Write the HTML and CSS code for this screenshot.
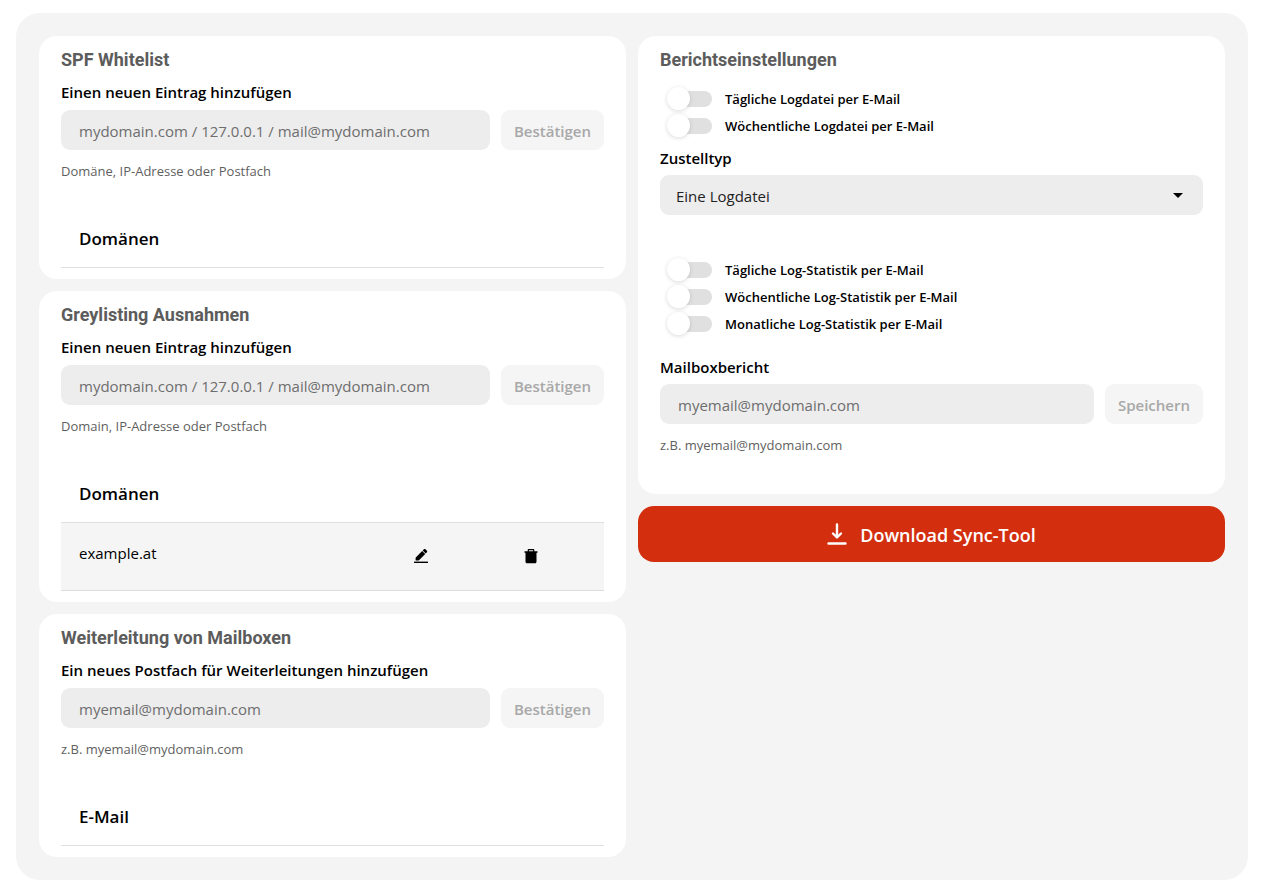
FILE: index.html
```html
<!DOCTYPE html>
<html lang="de">
<head>
<meta charset="utf-8">
<meta name="viewport" content="width=device-width, initial-scale=1">
<title>Einstellungen</title>
<link rel="stylesheet" href="styles.css">
</head>
<body>
<main class="panel">
  <div class="column">
    <section class="card">
      <h2 class="card-title">SPF Whitelist</h2>
      <form class="entry">
        <label class="field-label" for="spf">Einen neuen Eintrag hinzufügen</label>
        <div class="field-row">
          <input class="text-input" id="spf" type="text" placeholder="mydomain.com / 127.0.0.1 / mail@mydomain.com">
          <button class="submit" type="submit" disabled>Bestätigen</button>
        </div>
        <p class="hint">Domäne, IP-Adresse oder Postfach</p>
      </form>
      <table class="list">
        <thead><tr><th scope="col">Domänen</th></tr></thead>
      </table>
    </section>

    <section class="card">
      <h2 class="card-title">Greylisting Ausnahmen</h2>
      <form class="entry">
        <label class="field-label" for="grey">Einen neuen Eintrag hinzufügen</label>
        <div class="field-row">
          <input class="text-input" id="grey" type="text" placeholder="mydomain.com / 127.0.0.1 / mail@mydomain.com">
          <button class="submit" type="submit" disabled>Bestätigen</button>
        </div>
        <p class="hint">Domain, IP-Adresse oder Postfach</p>
      </form>
      <table class="list">
        <thead><tr><th scope="col" colspan="3">Domänen</th></tr></thead>
        <tbody>
          <tr>
            <td>example.at</td>
            <td class="action">
              <button class="icon-button" type="button" aria-label="Bearbeiten">
                <svg class="icon" viewBox="0 0 16 16" aria-hidden="true"><path d="M1 13.600h14V15H1z"/><path d="M3 9.200 9.200 3l3 3L6 12.200c-.3.3-.6.4-1 .4H3.200c-.4 0-.6-.2-.6-.6v-1.800c0-.4.1-.7.4-1zM9.700 2.500l1.200-1.200c.5-.5 1.100-.5 1.600 0l1.400 1.400c.5.5.5 1.100 0 1.600l-1.200 1.200z"/></svg>
              </button>
            </td>
            <td class="action action-last">
              <button class="icon-button" type="button" aria-label="Löschen">
                <svg class="icon" viewBox="0 0 16 16" aria-hidden="true"><path fill-rule="evenodd" d="M5.500 1h5c.5 0 .8.3.8.8v1.500h3.200v1.400h-1v9c0 .9-.6 1.500-1.500 1.500H4c-.9 0-1.500-.6-1.500-1.500v-9h-1V3.300h3.200V1.800c0-.5.3-.8.8-.8zm.4 1.200v1.100h4.200V2.200z"/></svg>
              </button>
            </td>
          </tr>
        </tbody>
      </table>
    </section>

    <section class="card">
      <h2 class="card-title">Weiterleitung von Mailboxen</h2>
      <form class="entry">
        <label class="field-label" for="forward">Ein neues Postfach für Weiterleitungen hinzufügen</label>
        <div class="field-row">
          <input class="text-input" id="forward" type="email" placeholder="myemail@mydomain.com">
          <button class="submit" type="submit" disabled>Bestätigen</button>
        </div>
        <p class="hint">z.B. myemail@mydomain.com</p>
      </form>
      <table class="list">
        <thead><tr><th scope="col">E-Mail</th></tr></thead>
      </table>
    </section>
  </div>

  <div class="column">
    <section class="card card-reports">
      <h2 class="card-title">Berichtseinstellungen</h2>
      <div class="switches">
        <label class="switch-row"><input class="switch" type="checkbox"><span>Tägliche Logdatei per E-Mail</span></label>
        <label class="switch-row"><input class="switch" type="checkbox"><span>Wöchentliche Logdatei per E-Mail</span></label>
      </div>
      <label class="field-label" for="delivery">Zustelltyp</label>
      <select class="select" id="delivery"><option>Eine Logdatei</option></select>
      <div class="switches switches-stats">
        <label class="switch-row"><input class="switch" type="checkbox"><span>Tägliche Log-Statistik per E-Mail</span></label>
        <label class="switch-row"><input class="switch" type="checkbox"><span>Wöchentliche Log-Statistik per E-Mail</span></label>
        <label class="switch-row"><input class="switch" type="checkbox"><span>Monatliche Log-Statistik per E-Mail</span></label>
      </div>
      <form class="report-form">
        <label class="field-label" for="report">Mailboxbericht</label>
        <div class="field-row">
          <input class="text-input" id="report" type="email" placeholder="myemail@mydomain.com">
          <button class="submit" type="submit" disabled>Speichern</button>
        </div>
        <p class="hint">z.B. myemail@mydomain.com</p>
      </form>
    </section>
    <button class="download" type="button">
      <svg class="download-icon" viewBox="0 0 20 22" aria-hidden="true"><path d="M10 1.500v12.500M6 10.500l4 4 4-4M1.500 20.500h17"/></svg>
      <span>Download Sync-Tool</span>
    </button>
  </div>
</main>
</body>
</html>
```

FILE: styles.css
```css
*,
*::before,
*::after {
  box-sizing: border-box;
}

body {
  margin: 0;
  padding: 13px 34px 14px 16px;
  background: #fff;
  color: #000;
  font-family: "Open Sans", "Noto Sans", sans-serif;
  font-size: 15px;
  line-height: 24px;
}

button,
input,
select {
  margin: 0;
  border: 0;
  font: inherit;
}

.panel {
  display: grid;
  grid-template-columns: repeat(2, minmax(0, 1fr));
  gap: 12px;
  padding: 23px;
  border-radius: 24px;
  background: #f4f4f4;
}

.column {
  display: flex;
  flex-direction: column;
  gap: 12px;
}

.card {
  padding: 12px 22px 11px;
  border-radius: 18px;
  background: #fff;
}

.card-reports {
  padding-bottom: 39px;
}

.card-title {
  margin: 0;
  color: #5c5c5c;
  font-family: Roboto, sans-serif;
  font-size: 18px;
  font-weight: 700;
}

.entry {
  margin-top: 8px;
}

.field-label {
  display: block;
  margin-bottom: 6px;
  font-weight: 600;
}

.field-row {
  display: flex;
  gap: 11px;
}

.text-input {
  flex: 1;
  min-width: 0;
  height: 40px;
  padding: 1px 18px 0;
  border-radius: 9px;
  background: #ededed;
  color: #222;
}

.text-input::placeholder {
  color: #6e6e6e;
  opacity: 1;
}

.submit {
  height: 40px;
  padding: 1px 13px 0;
  border-radius: 9px;
  background: #f5f5f5;
  color: #a8a8a8;
  font-weight: 600;
}

.hint {
  margin: 11px 0 0;
  color: #5f5f5f;
  font-size: 13px;
  line-height: 20px;
}

.list {
  width: 100%;
  margin-top: 30px;
  border-collapse: separate;
  border-spacing: 0;
}

.list th {
  height: 57px;
  padding: 0 18px;
  border-bottom: 1px solid #e0e0e0;
  font-size: 17px;
  font-weight: 600;
  text-align: left;
}

.list td {
  height: 68px;
  padding: 0 18px 8px;
  border-bottom: 1px solid #dcdcdc;
  background: #f5f5f5;
}

.list .action {
  width: 110px;
  padding: 0 0 2px;
  text-align: center;
}

.list .action-last {
  width: 128px;
  padding-right: 18px;
}

.icon-button {
  display: inline-flex;
  padding: 8px;
  background: none;
  vertical-align: middle;
}

.icon {
  width: 16px;
  height: 16px;
}

.switches {
  margin: 13px 0 6px;
}

.switches-stats {
  margin: 41px 0 17px;
}

.card-reports .switches {
  padding-bottom: 1px;
}

.switch-row {
  display: flex;
  align-items: center;
  gap: 13px;
  height: 27px;
  padding-left: 16px;
  font-size: 13px;
  font-weight: 600;
}

.switch {
  position: relative;
  width: 36px;
  height: 16px;
  border-radius: 8px;
  background: #e0e0e0;
  appearance: none;
}

.card-reports .field-label {
  margin-bottom: 5px;
}

.switch::after {
  content: "";
  position: absolute;
  top: -4px;
  left: -9px;
  width: 23px;
  height: 23px;
  border-radius: 50%;
  background: #fff;
  box-shadow: 0 1px 4px rgba(0, 0, 0, 0.15);
}

.switch:checked::after {
  left: 22px;
}

.select {
  display: block;
  width: 100%;
  height: 40px;
  padding: 1px 16px 0;
  border-radius: 9px;
  background: #ededed url("data:image/svg+xml,%3Csvg xmlns='http://www.w3.org/2000/svg' viewBox='0 0 10 5'%3E%3Cpath d='M0 0h10L5 5z'/%3E%3C/svg%3E") no-repeat right 20px center / 10px 5px;
  color: #222;
  appearance: none;
}

.download {
  display: flex;
  align-items: center;
  justify-content: center;
  gap: 13px;
  height: 56px;
  padding: 0 22px;
  border-radius: 16px;
  background: #d32f0f;
  color: #fff;
  font-size: 18px;
  font-weight: 600;
}

.download span {
  padding-top: 2px;
}

.download-icon {
  width: 20px;
  height: 22px;
  fill: none;
  stroke: #fff;
  stroke-width: 2.4;
  stroke-linecap: round;
  stroke-linejoin: round;
}
```
